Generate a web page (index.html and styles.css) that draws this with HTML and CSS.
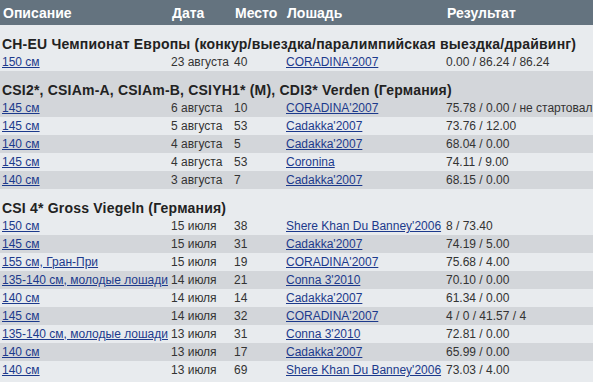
FILE: index.html
```html
<!DOCTYPE html>
<html lang="ru">
<head>
<meta charset="utf-8">
<link rel="stylesheet" href="styles.css">
</head>
<body>
<table class="results">
  <colgroup>
    <col class="c-desc"><col class="c-date"><col class="c-place"><col class="c-horse"><col class="c-res">
  </colgroup>
  <thead>
    <tr><th>Описание</th><th>Дата</th><th>Место</th><th>Лошадь</th><th>Результат</th></tr>
  </thead>
  <tbody>
    <tr class="light title"><td colspan="5">CH-EU Чемпионат Европы (конкур/выездка/паралимпийская выездка/драйвинг)</td></tr>
    <tr class="light"><td><a href="#">150 см</a></td><td>23 августа</td><td>40</td><td><a href="#">CORADINA'2007</a></td><td>0.00 / 86.24 / 86.24</td></tr>

    <tr class="dark title"><td colspan="5">CSI2*, CSIAm-A, CSIAm-B, CSIYH1* (M), CDI3* Verden (Германия)</td></tr>
    <tr class="dark"><td><a href="#">145 см</a></td><td>6 августа</td><td>10</td><td><a href="#">CORADINA'2007</a></td><td>75.78 / 0.00 / не стартовал</td></tr>
    <tr class="light"><td><a href="#">145 см</a></td><td>5 августа</td><td>53</td><td><a href="#">Cadakka'2007</a></td><td>73.76 / 12.00</td></tr>
    <tr class="dark"><td><a href="#">140 см</a></td><td>4 августа</td><td>5</td><td><a href="#">Cadakka'2007</a></td><td>68.04 / 0.00</td></tr>
    <tr class="light"><td><a href="#">145 см</a></td><td>4 августа</td><td>53</td><td><a href="#">Coronina</a></td><td>74.11 / 9.00</td></tr>
    <tr class="dark"><td><a href="#">140 см</a></td><td>3 августа</td><td>7</td><td><a href="#">Cadakka'2007</a></td><td>68.15 / 0.00</td></tr>

    <tr class="light title"><td colspan="5">CSI 4* Gross Viegeln (Германия)</td></tr>
    <tr class="light"><td><a href="#">150 см</a></td><td>15 июля</td><td>38</td><td><a href="#">Shere Khan Du Banney'2006</a></td><td>8 / 73.40</td></tr>
    <tr class="dark"><td><a href="#">145 см</a></td><td>15 июля</td><td>31</td><td><a href="#">Cadakka'2007</a></td><td>74.19 / 5.00</td></tr>
    <tr class="light"><td><a href="#">155 см, Гран-При</a></td><td>15 июля</td><td>19</td><td><a href="#">CORADINA'2007</a></td><td>75.68 / 4.00</td></tr>
    <tr class="dark"><td><a href="#">135-140 см, молодые лошади</a></td><td>14 июля</td><td>21</td><td><a href="#">Conna 3'2010</a></td><td>70.10 / 0.00</td></tr>
    <tr class="light"><td><a href="#">140 см</a></td><td>14 июля</td><td>14</td><td><a href="#">Cadakka'2007</a></td><td>61.34 / 0.00</td></tr>
    <tr class="dark"><td><a href="#">145 см</a></td><td>14 июля</td><td>32</td><td><a href="#">CORADINA'2007</a></td><td>4 / 0 / 41.57 / 4</td></tr>
    <tr class="light"><td><a href="#">135-140 см, молодые лошади</a></td><td>13 июля</td><td>31</td><td><a href="#">Conna 3'2010</a></td><td>72.81 / 0.00</td></tr>
    <tr class="dark"><td><a href="#">140 см</a></td><td>13 июля</td><td>17</td><td><a href="#">Cadakka'2007</a></td><td>65.99 / 0.00</td></tr>
    <tr class="light"><td><a href="#">140 см</a></td><td>13 июля</td><td>69</td><td><a href="#">Shere Khan Du Banney'2006</a></td><td>73.03 / 4.00</td></tr>
  </tbody>
</table>
</body>
</html>
```
FILE: styles.css
```css
html, body {
  margin: 0;
  padding: 0;
  background: #e8ebee;
}
.results {
  border-collapse: collapse;
  table-layout: fixed;
  width: 593px;
  font-family: "Liberation Sans", Arial, sans-serif;
  font-size: 12px;
  color: #333;
}
.c-desc { width: 169px; }
.c-date { width: 63px; }
.c-place { width: 52px; }
.c-horse { width: 160px; }
.c-res { width: 149px; }
.results th {
  background: #64737f;
  color: #fff;
  font-weight: bold;
  font-size: 14px;
  text-align: left;
  height: 25px;
  padding: 0 0 0 3px;
  white-space: nowrap;
  overflow: hidden;
}
.results td {
  height: 18px;
  line-height: 18px;
  padding: 0 0 0 2px;
  white-space: nowrap;
  vertical-align: top;
}
.results tr.light { background: #e8ebee; }
.results tr.dark { background: #d3d6da; }
.results tr.title td {
  height: 28px;
  padding-top: 10px;
  box-sizing: border-box;
  font-weight: bold;
  font-size: 14px;
  letter-spacing: 0.2px;
  color: #222;
}
.results a {
  color: #1c3a8c;
  text-decoration: underline;
}
```
